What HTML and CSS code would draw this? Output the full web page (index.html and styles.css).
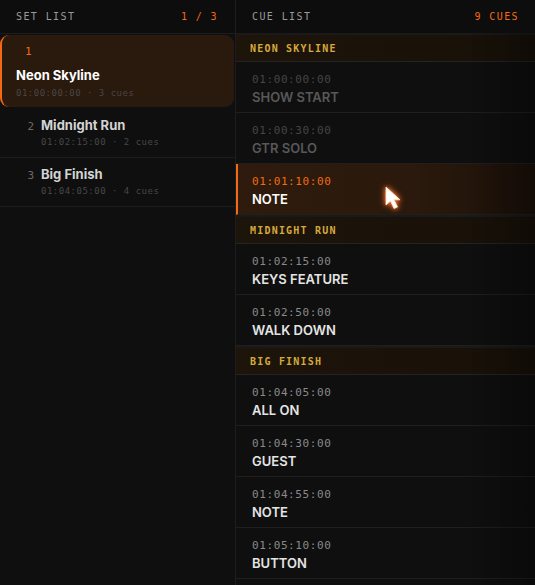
FILE: index.html
```html
<!DOCTYPE html>
<html lang="en">
    <head>
        <title>Show Control</title>
        <link rel="stylesheet" href="styles.css">
    </head>
    <body>
    <div class="app">
      <section class="set-panel">
        <div class="panel-head">
          <span class="head-title">SET LIST</span>
          <span class="head-count">1 / 3</span>
        </div>
        <ul class="set-list">
          <li class="set-item active">
            <span class="set-num">1</span>
            <span class="set-name">Neon Skyline</span>
            <span class="set-meta">01:00:00:00 · 3 cues</span>
          </li>
          <li class="set-item">
            <span class="set-num">2</span>
            <span class="set-name">Midnight Run</span>
            <span class="set-meta">01:02:15:00 · 2 cues</span>
          </li>
          <li class="set-item">
            <span class="set-num">3</span>
            <span class="set-name">Big Finish</span>
            <span class="set-meta">01:04:05:00 · 4 cues</span>
          </li>
        </ul>
      </section>

      <section class="cue-panel">
        <div class="panel-head">
          <span class="head-title">CUE LIST</span>
          <span class="head-count">9 CUES</span>
        </div>
        <div class="cue-body">
          <div class="cue-section">NEON SKYLINE</div>
          <div class="cue past"><span class="cue-time">01:00:00:00</span><span class="cue-name">SHOW START</span></div>
          <div class="cue past"><span class="cue-time">01:00:30:00</span><span class="cue-name">GTR SOLO</span></div>
          <div class="cue current"><span class="cue-time">01:01:10:00</span><span class="cue-name">NOTE</span></div>

          <div class="cue-section">MIDNIGHT RUN</div>
          <div class="cue"><span class="cue-time">01:02:15:00</span><span class="cue-name">KEYS FEATURE</span></div>
          <div class="cue"><span class="cue-time">01:02:50:00</span><span class="cue-name">WALK DOWN</span></div>

          <div class="cue-section">BIG FINISH</div>
          <div class="cue"><span class="cue-time">01:04:05:00</span><span class="cue-name">ALL ON</span></div>
          <div class="cue"><span class="cue-time">01:04:30:00</span><span class="cue-name">GUEST</span></div>
          <div class="cue"><span class="cue-time">01:04:55:00</span><span class="cue-name">NOTE</span></div>
          <div class="cue"><span class="cue-time">01:05:10:00</span><span class="cue-name">BUTTON</span></div>

          <div class="edge-fade"></div>
        </div>
      </section>

      <!-- mouse pointer over the current cue -->
      <svg class="pointer" width="22" height="28" viewBox="0 0 22 28">
        <path d="M3 2 L3 20 L7.5 16 L11 23.5 L14.5 22 L11 14.8 L17 14.8 Z" fill="#fff" stroke="#ffe2cc" stroke-width="0.8" stroke-linejoin="round"/>
      </svg>
    </div>
    </body>
</html>
```

FILE: styles.css
```css
body{
    margin: 0;
    background-color: #0f0f0f;
    font-family: "Inter", "Noto Sans", sans-serif;
}
ul{
    list-style-type: none;
    margin: 0;
    padding: 0;
}
.app{
    position: relative;
    display: flex;
    width: 535px;
    height: 585px;
    overflow: hidden;
    background-color: #0f0f0f;
}
.set-panel{
    width: 235px;
    border-right: 1px solid #1d1d1d;
    flex-shrink: 0;
}
.cue-panel{
    flex: 1;
    display: flex;
    flex-direction: column;
}
.panel-head{
    height: 33px;
    display: flex;
    align-items: center;
    justify-content: space-between;
    padding: 0 16px;
    background-color: #0d0d0d;
    font-family: "DejaVu Sans Mono", monospace;
    font-size: 10px;
    letter-spacing: 1.4px;
}
.set-panel .panel-head{
    border-bottom: 1px solid #1d1d1d;
    padding-right: 17px;
}
.head-title{
    color: #9a9a9a;
}
.head-count{
    color: #f26a12;
}

/* set list */
.set-item{
    display: flex;
    flex-wrap: wrap;
    align-items: baseline;
    padding: 7px 16px 8px 16px;
    border-bottom: 1px solid #1d1d1d;
}
.set-num{
    width: 18px;
    margin-right: 7px;
    text-align: right;
    font-family: "DejaVu Sans Mono", monospace;
    font-size: 11px;
    color: #6a6a6a;
}
.set-name{
    font-size: 13px;
    line-height: 18px;
    font-weight: 700;
    color: #d4d4d4;
}
.set-meta{
    width: 100%;
    padding-left: 25px;
    margin-top: 1px;
    font-family: "DejaVu Sans Mono", monospace;
    font-size: 9px;
    line-height: 14px;
    letter-spacing: 0.5px;
    color: #474747;
}
.set-item.active{
    flex-direction: column;
    align-items: flex-start;
    margin: 1px 1px 2px 0;
    padding: 9px 16px 7px 14px;
    background-color: #2a190d;
    border: none;
    border-left: 2px solid #f26a12;
    border-radius: 9px;
}
.set-item.active .set-num{
    width: auto;
    margin: 0 0 6px 9px;
    line-height: 16px;
    color: #f26a12;
}
.set-item.active .set-name{
    color: #ffffff;
}
.set-item.active .set-meta{
    padding-left: 0;
    margin-top: 2px;
}

/* cue list */
.cue-body{
    position: relative;
    flex: 1;
}
.cue-section{
    height: 26px;
    display: flex;
    align-items: center;
    padding: 1px 14px 0 14px;
    box-sizing: border-box;
    height: 29px;
    border-top: 2px solid #1a1a1a;
    border-bottom: 1px solid #242424;
    background: linear-gradient(to right, #1d140a, #181108);
    font-family: "DejaVu Sans Mono", monospace;
    font-size: 10px;
    font-weight: bold;
    letter-spacing: 1.2px;
    color: #d6a93c;
}
.cue{
    display: flex;
    flex-direction: column;
    padding: 10px 16px 0 16px;
    border-bottom: 1px solid #1f1f1f;
    box-sizing: border-box;
    height: 51px;
}
.cue-time{
    font-family: "DejaVu Sans Mono", monospace;
    font-size: 11px;
    line-height: 16px;
    letter-spacing: 0.6px;
    color: #8a8a8a;
}
.cue-name{
    font-size: 13px;
    line-height: 18px;
    font-weight: 600;
    color: #e4e4e4;
}
.cue.past .cue-time{
    color: #454545;
}
.cue.past .cue-name{
    color: #585858;
}
.cue.current{
    padding-left: 14px;
    border-left: 2px solid #f26a12;
    background: linear-gradient(to right, #2e1b0d, #2a190c 60%, #1c1109);
}
.cue.current .cue-time{
    color: #f26a12;
}
.cue.current .cue-name{
    color: #ffffff;
}
.edge-fade{
    position: absolute;
    top: 0;
    right: 0;
    bottom: 0;
    width: 70px;
    background: linear-gradient(to right, rgba(0,0,0,0), rgba(0,0,0,0.35));
    pointer-events: none;
}
.pointer{
    position: absolute;
    left: 383px;
    top: 185px;
    filter: drop-shadow(0 0 2px #ff7a35) drop-shadow(0 0 3px rgba(255,110,40,0.6));
}
```
